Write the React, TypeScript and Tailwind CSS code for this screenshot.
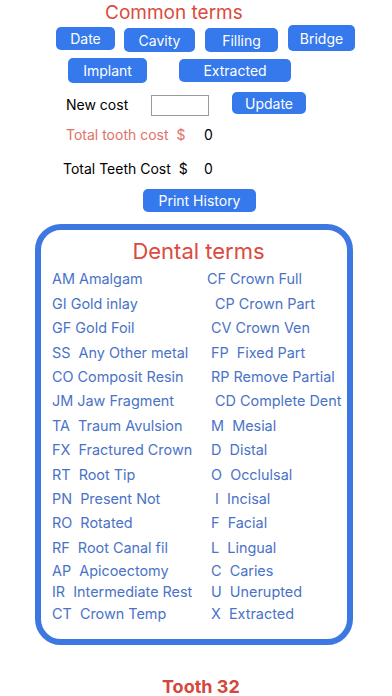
import React from "react";

const leftTerms = [
  "AM Amalgam",
  "GI Gold inlay",
  "GF Gold Foil",
  "SS  Any Other metal",
  "CO Composit Resin",
  "JM Jaw Fragment",
  "TA  Traum Avulsion",
  "FX  Fractured Crown",
  "RT  Root Tip",
  "PN  Present Not",
  "RO  Rotated",
  "RF  Root Canal fil",
  "AP  Apicoectomy",
  "IR  Intermediate Rest",
  "CT  Crown Temp",
];

const rightTerms = [
  "CF Crown Full",
  "  CP Crown Part",
  " CV Crown Ven",
  " FP  Fixed Part",
  " RP Remove Partial",
  "  CD Complete Dent",
  " M  Mesial",
  " D  Distal",
  " O  Occlulsal",
  "  I  Incisal",
  " F  Facial",
  " L  Lingual",
  " C  Caries",
  " U  Unerupted",
  " X  Extracted",
];

const btn =
  "flex items-center justify-center rounded-[5px] bg-[#3579ec] text-white text-[14px]";

const App: React.FC = () => {
  return (
    <div
      className="w-[392px] h-[696px] bg-white overflow-hidden"
      style={{ fontFamily: "Inter, 'Noto Sans', sans-serif" }}
    >
      {/* Common terms */}
      <div className="pt-[1px] pl-[105px] text-[19px] leading-[24px] text-[#dc4a3e]">
        Common terms
      </div>

      <div className="flex items-start h-[27px] pl-[56px]">
        <button className={`${btn} mt-[2px] w-[59px] h-[23px]`}>Date</button>
        <button className={`${btn} mt-[3px] ml-[9px] w-[71px] h-[24px]`}>Cavity</button>
        <button className={`${btn} mt-[3px] ml-[10px] w-[73px] h-[24px]`}>Filling</button>
        <button className={`${btn} ml-[10px] w-[67px] h-[26px]`}>Bridge</button>
      </div>

      <div className="flex items-start h-[25px] mt-[6px] pl-[68px]">
        <button className={`${btn} w-[79px] h-[25px]`}>Implant</button>
        <button className={`${btn} mt-[1px] ml-[32px] w-[112px] h-[23px]`}>Extracted</button>
      </div>

      {/* Cost */}
      <div className="flex items-start h-[24px] mt-[9px] pl-[66px]">
        <span className="w-[85px] text-[14px] leading-[24px] mt-[1px] text-black">New cost</span>
        <input
          type="text"
          className="w-[58px] h-[21px] mt-[3px] border border-[#9a9a9a] bg-white outline-none"
        />
        <button className={`${btn} ml-[23px] w-[74px] h-[22px]`}>Update</button>
      </div>

      <div className="flex items-center h-[20px] mt-[8px] pl-[66px] text-[14px]">
        <span className="w-[138px] whitespace-pre text-[#e07168]">Total tooth cost  $</span>
        <span className="text-black">0</span>
      </div>

      <div className="flex items-center h-[20px] mt-[14px] pl-[63px] text-[14px] text-black">
        <span className="w-[141px] whitespace-pre">Total Teeth Cost  $</span>
        <span>0</span>
      </div>

      <button className={`${btn} mt-[11px] ml-[143px] w-[113px] h-[23px]`}>
        Print History
      </button>

      {/* Dental terms */}
      <div className="mt-[12px] ml-[35px] w-[318px] h-[421px] border-[6px] border-[#3d78e2] rounded-[26px]">
        <div className="pt-[7px] pl-[9px] text-center text-[22px] leading-[28px] text-[#dc4a3e]">
          Dental terms
        </div>
        <div className="mt-[2px] pl-[11px] text-[14.4px] text-[#4a73c6]">
          {leftTerms.map((l, i) => (
            <div
              key={l}
              className={`flex items-center whitespace-pre ${i < 12 ? "h-[24.4px]" : "h-[21.5px]"}`}
            >
              <span className="w-[155px]">{l}</span>
              <span>{rightTerms[i]}</span>
            </div>
          ))}
        </div>
      </div>

      <div className="mt-[31px] pl-[162px] text-[18px] leading-[22px] font-bold text-[#d4473c]">
        Tooth 32
      </div>
    </div>
  );
};

export default App;
